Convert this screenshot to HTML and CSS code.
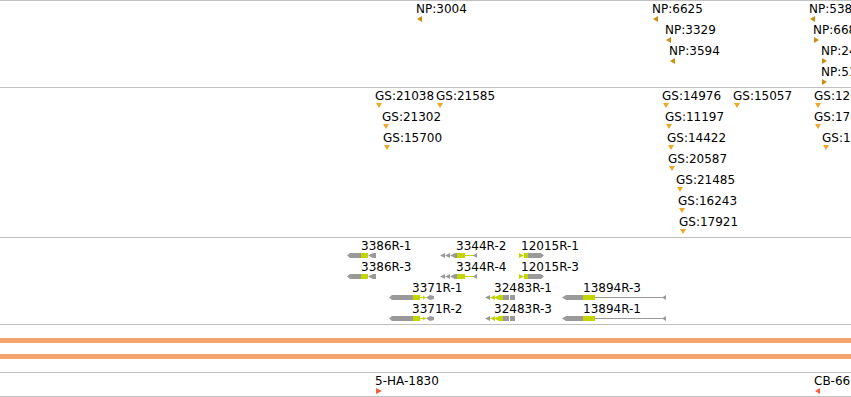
FILE: index.html
```html
<!DOCTYPE html>
<html>
<head>
<meta charset="utf-8">
<title>Tracks</title>
<link rel="stylesheet" href="styles.css">
</head>
<body>
<div class="tracks">
  <section class="track t-np">
    <div class="feat" style="left:417px;top:1px"><span class="lbl">NP:3004</span><svg class="tri" width="6" height="6"><polygon class="np" points="0,3 5,0 5,6"/></svg></div>
    <div class="feat" style="left:653px;top:1px"><span class="lbl">NP:6625</span><svg class="tri" width="6" height="6"><polygon class="np" points="0,3 5,0 5,6"/></svg></div>
    <div class="feat" style="left:666px;top:22px"><span class="lbl">NP:3329</span><svg class="tri" width="6" height="6"><polygon class="np" points="0,3 5,0 5,6"/></svg></div>
    <div class="feat" style="left:670px;top:43px"><span class="lbl">NP:3594</span><svg class="tri" width="6" height="6"><polygon class="np" points="0,3 5,0 5,6"/></svg></div>
    <div class="feat" style="left:810px;top:1px"><span class="lbl">NP:5386</span><svg class="tri" width="6" height="6"><polygon class="np" points="0,3 5,0 5,6"/></svg></div>
    <div class="feat" style="left:814px;top:22px"><span class="lbl">NP:6681</span><svg class="tri" width="6" height="6"><polygon class="np" points="0,0 5,3 0,6"/></svg></div>
    <div class="feat" style="left:822px;top:43px"><span class="lbl">NP:2457</span><svg class="tri" width="6" height="6"><polygon class="np" points="0,0 5,3 0,6"/></svg></div>
    <div class="feat" style="left:822px;top:64px"><span class="lbl">NP:5102</span><svg class="tri" width="6" height="6"><polygon class="np" points="0,0 5,3 0,6"/></svg></div>
  </section>

  <section class="track t-gs">
    <div class="feat" style="left:376px;top:1px"><span class="lbl">GS:21038</span><svg class="tri" width="6" height="5"><polygon class="gs" points="0,0 6,0 3,5"/></svg></div>
    <div class="feat" style="left:437px;top:1px"><span class="lbl">GS:21585</span><svg class="tri" width="6" height="5"><polygon class="gs" points="0,0 6,0 3,5"/></svg></div>
    <div class="feat" style="left:383px;top:22px"><span class="lbl">GS:21302</span><svg class="tri" width="6" height="5"><polygon class="gs" points="0,0 6,0 3,5"/></svg></div>
    <div class="feat" style="left:384px;top:43px"><span class="lbl">GS:15700</span><svg class="tri" width="6" height="5"><polygon class="gs" points="0,0 6,0 3,5"/></svg></div>
    <div class="feat" style="left:663px;top:1px"><span class="lbl">GS:14976</span><svg class="tri" width="6" height="5"><polygon class="gs" points="0,0 6,0 3,5"/></svg></div>
    <div class="feat" style="left:734px;top:1px"><span class="lbl">GS:15057</span><svg class="tri" width="6" height="5"><polygon class="gs" points="0,0 6,0 3,5"/></svg></div>
    <div class="feat" style="left:815px;top:1px"><span class="lbl">GS:12687</span><svg class="tri" width="6" height="5"><polygon class="gs" points="0,0 6,0 3,5"/></svg></div>
    <div class="feat" style="left:666px;top:22px"><span class="lbl">GS:11197</span><svg class="tri" width="6" height="5"><polygon class="gs" points="0,0 6,0 3,5"/></svg></div>
    <div class="feat" style="left:815px;top:22px"><span class="lbl">GS:17842</span><svg class="tri" width="6" height="5"><polygon class="gs" points="0,0 6,0 3,5"/></svg></div>
    <div class="feat" style="left:668px;top:43px"><span class="lbl">GS:14422</span><svg class="tri" width="6" height="5"><polygon class="gs" points="0,0 6,0 3,5"/></svg></div>
    <div class="feat" style="left:823px;top:43px"><span class="lbl">GS:15321</span><svg class="tri" width="6" height="5"><polygon class="gs" points="0,0 6,0 3,5"/></svg></div>
    <div class="feat" style="left:669px;top:64px"><span class="lbl">GS:20587</span><svg class="tri" width="6" height="5"><polygon class="gs" points="0,0 6,0 3,5"/></svg></div>
    <div class="feat" style="left:677px;top:85px"><span class="lbl">GS:21485</span><svg class="tri" width="6" height="5"><polygon class="gs" points="0,0 6,0 3,5"/></svg></div>
    <div class="feat" style="left:679px;top:106px"><span class="lbl">GS:16243</span><svg class="tri" width="6" height="5"><polygon class="gs" points="0,0 6,0 3,5"/></svg></div>
    <div class="feat" style="left:680px;top:127px"><span class="lbl">GS:17921</span><svg class="tri" width="6" height="5"><polygon class="gs" points="0,0 6,0 3,5"/></svg></div>
  </section>

  <section class="track t-gene">
    <div class="feat" style="left:347px;top:1px"><span class="lbl" style="margin-left:14px">3386R-1</span>
      <svg class="glyph" width="29" height="5"><polygon class="utr" points="0,2.5 3,0 14,0 14,5 3,5"/><rect class="cds" x="14" y="0" width="7" height="5"/><polygon class="utr" points="21,2.5 26,0 26,5"/><rect class="utr" x="26" y="0" width="3" height="5"/></svg></div>
    <div class="feat" style="left:347px;top:22px"><span class="lbl" style="margin-left:14px">3386R-3</span>
      <svg class="glyph" width="29" height="5"><polygon class="utr" points="0,2.5 3,0 14,0 14,5 3,5"/><rect class="cds" x="14" y="0" width="7" height="5"/><polygon class="utr" points="21,2.5 26,0 26,5"/><rect class="utr" x="26" y="0" width="3" height="5"/></svg></div>

    <div class="feat" style="left:440px;top:1px"><span class="lbl" style="margin-left:16px">3344R-2</span>
      <svg class="glyph" width="37" height="5"><polygon class="utr" points="0,2.5 5,0 5,5"/><polygon class="utr" points="5,2.5 10,0 10,5"/><polygon class="utr" points="10,2.5 15,0 17,0 17,5 15,5"/><rect class="cds" x="17" y="0" width="8" height="5"/><rect class="cds" x="25" y="2" width="9" height="1"/><polygon class="utr" points="33,2.5 37,0 37,5"/></svg></div>
    <div class="feat" style="left:440px;top:22px"><span class="lbl" style="margin-left:16px">3344R-4</span>
      <svg class="glyph" width="37" height="5"><polygon class="utr" points="0,2.5 5,0 5,5"/><polygon class="utr" points="5,2.5 10,0 10,5"/><polygon class="utr" points="10,2.5 15,0 17,0 17,5 15,5"/><rect class="cds" x="17" y="0" width="8" height="5"/><rect class="cds" x="25" y="2" width="9" height="1"/><polygon class="utr" points="33,2.5 37,0 37,5"/></svg></div>

    <div class="feat" style="left:519px;top:1px"><span class="lbl" style="margin-left:2px">12015R-1</span>
      <svg class="glyph" width="25" height="5"><polygon class="cds" points="0,0 5,2.5 0,5"/><rect class="cds" x="5" y="0" width="4" height="5"/><polygon class="utr" points="9,0 22,0 25,2.5 22,5 9,5"/></svg></div>
    <div class="feat" style="left:519px;top:22px"><span class="lbl" style="margin-left:2px">12015R-3</span>
      <svg class="glyph" width="25" height="5"><polygon class="cds" points="0,0 5,2.5 0,5"/><rect class="cds" x="5" y="0" width="4" height="5"/><polygon class="utr" points="9,0 22,0 25,2.5 22,5 9,5"/></svg></div>

    <div class="feat" style="left:389px;top:43px"><span class="lbl" style="margin-left:23px">3371R-1</span>
      <svg class="glyph" width="45" height="5"><polygon class="utr" points="0,2.5 3,0 24,0 24,5 3,5"/><rect class="cds" x="24" y="0" width="7" height="5"/><rect class="cds" x="31" y="2" width="6" height="1"/><polygon class="cds" points="34,0.5 37,2.5 34,4.5"/><polygon class="utr" points="37,2.5 41,0 45,1 45,4 41,5"/></svg></div>
    <div class="feat" style="left:389px;top:64px"><span class="lbl" style="margin-left:23px">3371R-2</span>
      <svg class="glyph" width="45" height="5"><polygon class="utr" points="0,2.5 3,0 24,0 24,5 3,5"/><rect class="cds" x="24" y="0" width="7" height="5"/><rect class="cds" x="31" y="2" width="6" height="1"/><polygon class="cds" points="34,0.5 37,2.5 34,4.5"/><polygon class="utr" points="37,2.5 41,0 45,1 45,4 41,5"/></svg></div>

    <div class="feat" style="left:485px;top:43px"><span class="lbl" style="margin-left:9px">32483R-1</span>
      <svg class="glyph" width="30" height="5"><polygon class="utr" points="0,2.5 5,0 5,5"/><polygon class="cds" points="5,2.5 10,0 10,5"/><polygon class="cds" points="9,2.5 14,0 18,0 18,5 14,5"/><rect class="utr" x="18" y="0" width="6" height="5"/><rect class="utr" x="25" y="0" width="5" height="5"/></svg></div>
    <div class="feat" style="left:485px;top:64px"><span class="lbl" style="margin-left:9px">32483R-3</span>
      <svg class="glyph" width="30" height="5"><polygon class="utr" points="0,2.5 5,0 5,5"/><polygon class="cds" points="5,2.5 10,0 10,5"/><polygon class="cds" points="9,2.5 14,0 18,0 18,5 14,5"/><rect class="utr" x="18" y="0" width="6" height="5"/><rect class="utr" x="25" y="0" width="5" height="5"/></svg></div>

    <div class="feat" style="left:562px;top:43px"><span class="lbl" style="margin-left:21px">13894R-3</span>
      <svg class="glyph" width="104" height="5"><polygon class="utr" points="0,2.5 4,0 21,0 21,5 4,5"/><rect class="cds" x="21" y="0" width="12" height="5"/><rect class="utr" x="33" y="2" width="68" height="1"/><polygon class="utr" points="100,2.5 104,0 104,5"/></svg></div>
    <div class="feat" style="left:562px;top:64px"><span class="lbl" style="margin-left:21px">13894R-1</span>
      <svg class="glyph" width="104" height="5"><polygon class="utr" points="0,2.5 4,0 21,0 21,5 4,5"/><rect class="cds" x="21" y="0" width="12" height="5"/><rect class="utr" x="33" y="2" width="68" height="1"/><polygon class="utr" points="100,2.5 104,0 104,5"/></svg></div>
  </section>

  <section class="track t-cov">
    <div class="bar"></div>
    <div class="bar"></div>
  </section>

  <section class="track t-site">
    <div class="feat" style="left:376px;top:1px"><span class="lbl">5-HA-1830</span><svg class="tri" width="6" height="6"><polygon class="site" points="0,0 6,3 0,6"/></svg></div>
    <div class="feat" style="left:815px;top:1px"><span class="lbl">CB-6634</span><svg class="tri" width="6" height="6"><polygon class="site" points="0,3 5,0 5,6"/></svg></div>
  </section>
</div>
</body>
</html>
```

FILE: styles.css
```css
html, body {
  margin: 0;
  padding: 0;
  background: #ffffff;
}

body {
  width: 851px;
  height: 397px;
  overflow: hidden;
  font-family: "DejaVu Sans", "Liberation Sans", sans-serif;
  font-size: 12px;
  color: #000000;
}

.tracks {
  display: flex;
  flex-direction: column;
  width: 851px;
}

.track {
  position: relative;
  border-top: 1px solid #c0c0c0;
  overflow: hidden;
  box-sizing: content-box;
}

.t-np { height: 86px; }
.t-gs { height: 149px; }
.t-gene { height: 86px; }

.t-cov {
  height: 21px;
  padding: 13px 0;
  display: flex;
  flex-direction: column;
  gap: 11px;
}

.t-site {
  height: 23px;
  border-bottom: 1px solid #c0c0c0;
}

.feat {
  position: absolute;
}

.lbl {
  display: block;
  line-height: 14px;
  white-space: nowrap;
  margin-left: -1px;
}

.tri,
.glyph {
  display: block;
}

.np { fill: #c98e0e; }
.gs { fill: #efa728; }
.site { fill: #f4623a; }
.utr { fill: #9a9a9a; }
.cds { fill: #c4d400; }

.bar {
  height: 5px;
  background: #f4a46c;
}
```
